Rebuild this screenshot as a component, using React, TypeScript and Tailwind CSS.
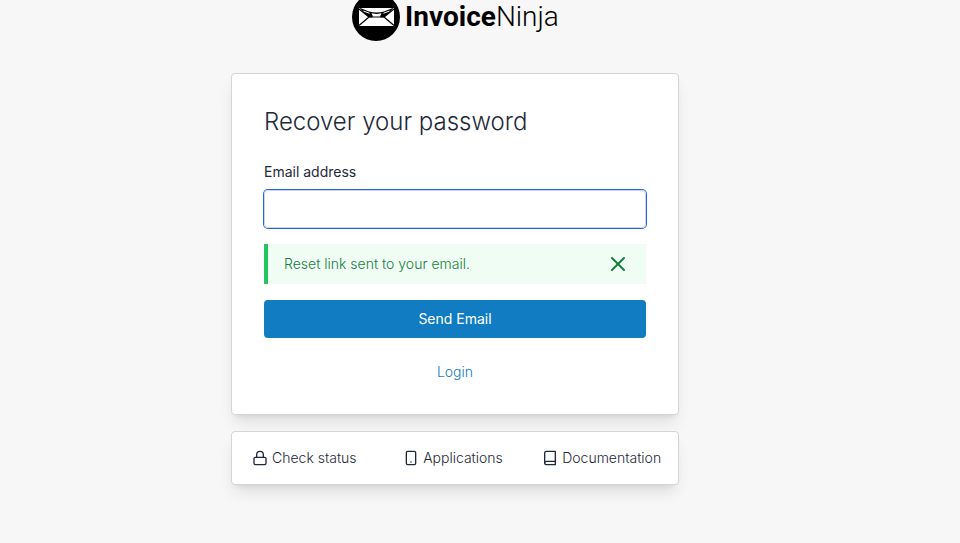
import React, { useState } from 'react';
import { FiBook, FiLock, FiSmartphone, FiX } from 'react-icons/fi';

const FOOTER_LINKS = [
  { label: 'Check status', href: '#status', icon: FiLock },
  { label: 'Applications', href: '#applications', icon: FiSmartphone },
  { label: 'Documentation', href: '#documentation', icon: FiBook },
];

// masked envelope, top of the circle runs off the page
const Logo: React.FC = () => (
  <div className="flex items-end justify-center gap-1 text-black">
    <svg width="50" height="41" viewBox="0 8 50 41" aria-hidden="true">
      <circle cx="25" cy="25" r="24" fill="#000" />
      <rect x="8" y="16" width="35" height="18" fill="#fff" />
      {/* flap folds */}
      <path
        d="M8 17 L18 25 L8 33.5 M43 17 L33 25 L43 33.5"
        fill="none"
        stroke="#000"
        strokeWidth="1.2"
      />
      {/* mask */}
      <path
        d="M8 15.5 L18 19.5 Q25.5 21.5 33 19.5 L43 15.5 L34 24.5 Q32 26.5 29.5 25.5 L21.5 25.5 Q19 26.5 17 24.5 Z"
        fill="#000"
      />
      <path d="M20.5 21.3 L25.5 22 L30.5 21.3 L29 24.6 L22 24.6 Z" fill="#fff" />
      <path d="M12.5 19 L18.5 21.3 M38.5 19 L32.5 21.3" stroke="#fff" strokeWidth="1" />
    </svg>
    <span className="pb-2 font-[Roboto,sans-serif] text-[28px] leading-8">
      <span className="font-bold">Invoice</span>
      <span className="font-light">Ninja</span>
    </span>
  </div>
);

interface AlertProps {
  children: React.ReactNode;
  onClose: () => void;
}

const Alert: React.FC<AlertProps> = ({ children, onClose }) => (
  <div
    role="status"
    className="mt-4 flex items-center justify-between border-l-4 border-[#22c55e] bg-green-50 px-4 py-2 text-[#15803d]"
  >
    <p>{children}</p>
    <button type="button" aria-label="Close" onClick={onClose}>
      <FiX size={24} />
    </button>
  </div>
);

const RecoverPassword: React.FC = () => {
  const [email, setEmail] = useState('');
  const [message, setMessage] = useState('Reset link sent to your email.');

  const handleSubmit = (e: React.FormEvent) => {
    e.preventDefault();
    setMessage('Reset link sent to your email.');
  };

  return (
    <div className="min-h-screen bg-[#f7f7f7] pr-[50px] font-[Inter,sans-serif] text-sm font-light text-gray-800">
      <Logo />

      <main className="mx-auto mt-8 w-full max-w-md">
        <form
          onSubmit={handleSubmit}
          className="rounded-sm border border-gray-300 bg-white p-8 shadow-lg"
        >
          <h1 className="text-2xl">Recover your password</h1>

          <label htmlFor="email" className="mt-6 block font-normal">
            Email address
          </label>
          <input
            id="email"
            type="email"
            value={email}
            onChange={(e) => setEmail(e.target.value)}
            className="mt-2 block h-[38px] w-full rounded-sm border border-gray-300 px-3 ring-1 ring-[#2563eb] outline-none"
          />

          {message && <Alert onClose={() => setMessage('')}>{message}</Alert>}

          <button
            type="submit"
            className="mt-4 block h-[38px] w-full rounded-sm bg-[#117cc1] font-normal text-white"
          >
            Send Email
          </button>

          <div className="mt-6 text-center">
            <a href="#login" className="text-[#117cc1]">
              Login
            </a>
          </div>
        </form>

        <nav className="mt-4 grid grid-cols-3 rounded-sm border border-gray-300 bg-white py-4 shadow-lg">
          {FOOTER_LINKS.map(({ label, href, icon: Icon }) => (
            <a key={label} href={href} className="flex items-center justify-center gap-1 pr-1">
              <Icon size={16} />
              {label}
            </a>
          ))}
        </nav>
      </main>
    </div>
  );
};

export default RecoverPassword;
